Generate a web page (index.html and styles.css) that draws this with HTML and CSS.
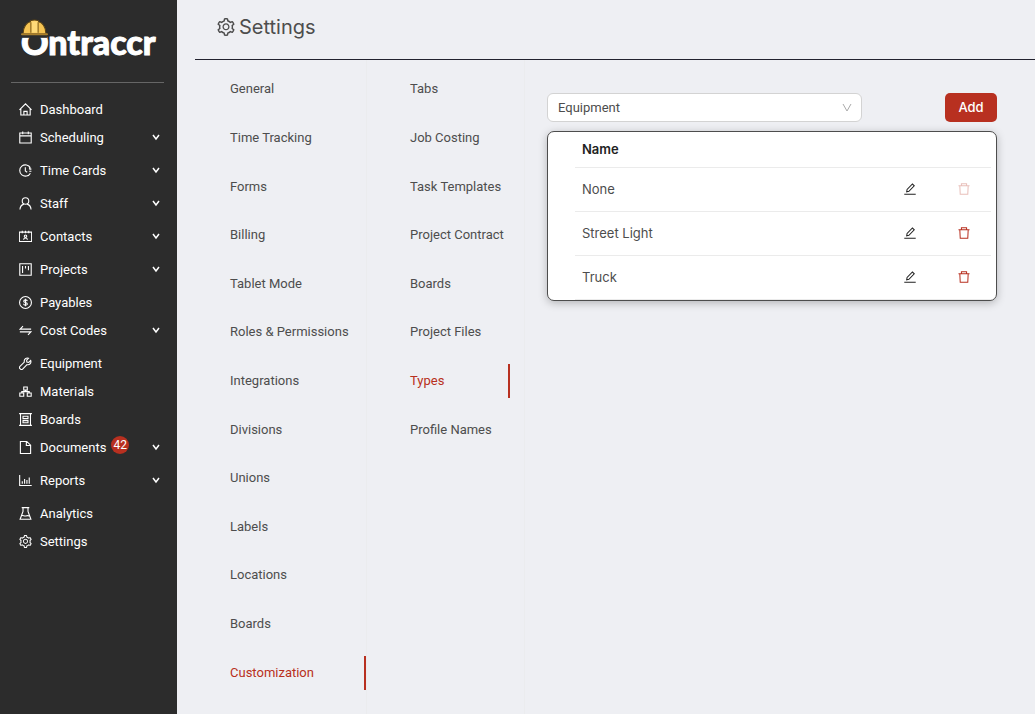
FILE: index.html
```
<!DOCTYPE html>
<html lang="en">

<head>
    <meta charset="UTF-8">
    <meta name="viewport" content="width=device-width, initial-scale=1.0">
    <title>Settings - Ontraccr</title>
    <link rel="stylesheet" href="styles.css">
</head>

<body>
    <!-- icon sprite -->
    <svg class="sprite" aria-hidden="true">
        <symbol id="i-home" viewBox="64 64 896 896">
            <path d="M96 540L512 124l416 416M190 460v430h644V460M400 890V640h224v250" />
        </symbol>
        <symbol id="i-calendar" viewBox="64 64 896 896">
            <path d="M118 200h788v690H118zM118 400h788M320 100v190M704 100v190" />
        </symbol>
        <symbol id="i-clock" viewBox="64 64 896 896">
            <path d="M850 330A390 390 0 1 0 850 694M500 280v260l130 90M770 420h150M770 560h150M850 330l-100 20" />
        </symbol>
        <symbol id="i-user" viewBox="64 64 896 896">
            <circle cx="512" cy="340" r="225" />
            <path d="M130 930c10-190 150-340 270-375M894 930c-10-190-150-340-270-375" />
        </symbol>
        <symbol id="i-contacts" viewBox="64 64 896 896">
            <path d="M90 210h844v650H90zM290 110v180M512 110v180M734 110v180M380 740c10-160 254-160 264 0" />
            <circle cx="512" cy="490" r="85" />
        </symbol>
        <symbol id="i-project" viewBox="64 64 896 896">
            <path d="M118 118h788v788H118zM310 270v484M512 270v180M714 270v300" />
        </symbol>
        <symbol id="i-dollar" viewBox="64 64 896 896">
            <circle cx="512" cy="512" r="410" />
            <path d="M635 420c-10-120-246-120-246 0 0 130 250 60 250 190 0 120-250 120-260-10M512 260v504" />
        </symbol>
        <symbol id="i-swap" viewBox="64 64 896 896">
            <path d="M900 420H140l200-210M124 604h760L684 814" />
        </symbol>
        <symbol id="i-tool" viewBox="64 64 896 896">
            <path d="M870 300L740 430l-135-15-15-135 130-130c-150-55-330 50-290 260L130 710c-50 50-50 100 0 150l34 34c50 50 100 50 150 0l300-300c210 40 310-140 256-294z" />
        </symbol>
        <symbol id="i-blocks" viewBox="64 64 896 896">
            <path d="M390 200h244v220H390zM120 620h270v220H120zM634 620h270v220H634zM512 420v100M255 620V520h514v100" />
        </symbol>
        <symbol id="i-board" viewBox="64 64 896 896">
            <path d="M70 110h884M70 914h884M170 110v804M854 110v804M340 290h344v160H340zM340 590h344v150H340z" />
        </symbol>
        <symbol id="i-file" viewBox="64 64 896 896">
            <path d="M160 90h430l274 264v580H160zM570 100v274h284" />
        </symbol>
        <symbol id="i-chart" viewBox="64 64 896 896">
            <path d="M110 130v730h830M290 740V570M450 740V400M610 740V480M770 740V310" />
        </symbol>
        <symbol id="i-flask" viewBox="64 64 896 896">
            <path d="M250 110h524M340 110v260L140 904h744L684 370V110M240 660c110-60 190 60 290 20s140-40 250 0" />
        </symbol>
        <symbol id="i-setting" viewBox="64 64 896 896">
            <path class="solid" d="M924.8 625.7l-65.5-56c3.1-19 4.7-38.4 4.7-57.8s-1.6-38.8-4.7-57.8l65.5-56a32.03 32.03 0 009.3-35.2l-.9-2.6a443.74 443.74 0 00-79.7-137.9l-1.8-2.1a32.12 32.12 0 00-35.1-9.5l-81.3 28.9c-30-24.6-63.5-44-99.7-57.6l-15.7-85a32.05 32.05 0 00-25.8-25.7l-2.7-.5c-52.1-9.4-106.9-9.4-159 0l-2.7.5a32.05 32.05 0 00-25.8 25.7l-15.8 85.4a351.86 351.86 0 00-99 57.4l-81.9-29.1a32 32 0 00-35.1 9.5l-1.8 2.1a446.02 446.02 0 00-79.7 137.9l-.9 2.6c-4.5 12.5-.8 26.5 9.3 35.2l66.3 56.6c-3.1 18.8-4.6 38-4.6 57.1 0 19.2 1.5 38.4 4.6 57.1L99 625.5a32.03 32.03 0 00-9.3 35.2l.9 2.6c18.1 50.4 44.9 96.9 79.7 137.9l1.8 2.1a32.12 32.12 0 0035.1 9.5l81.9-29.1c29.8 24.5 63.1 43.9 99 57.4l15.8 85.4a32.05 32.05 0 0025.8 25.7l2.7.5a449.4 449.4 0 00159 0l2.7-.5a32.05 32.05 0 0025.8-25.7l15.7-85a350 350 0 0099.7-57.6l81.3 28.9a32 32 0 0035.1-9.5l1.8-2.1c34.8-41.1 61.6-87.5 79.7-137.9l.9-2.6c4.5-12.3.8-26.3-9.3-35zM788.3 465.9c2.5 15.1 3.8 30.6 3.8 46.1s-1.3 31-3.8 46.1l-6.6 40.1 74.7 63.9a370.03 370.03 0 01-42.6 73.6L721 702.8l-31.4 25.8c-23.9 19.6-50.5 35-79.3 45.8l-38.1 14.3-17.9 97a377.5 377.5 0 01-85 0l-17.9-97.2-37.8-14.5c-28.5-10.8-55-26.2-78.7-45.7l-31.4-25.9-93.4 33.2c-17-22.9-31.2-47.6-42.6-73.6l75.5-64.5-6.5-40c-2.4-14.9-3.7-30.3-3.7-45.5 0-15.3 1.2-30.6 3.7-45.5l6.5-40-75.5-64.5c11.3-26.1 25.6-50.7 42.6-73.6l93.4 33.2 31.4-25.9c23.7-19.5 50.2-34.9 78.7-45.7l37.9-14.3 17.9-97.2c28.1-3.2 56.8-3.2 85 0l17.9 97 38.1 14.3c28.7 10.8 55.4 26.2 79.3 45.8l31.4 25.8 92.8-32.9c17 22.9 31.2 47.6 42.6 73.6L781.8 426l6.5 39.9zM512 326c-97.2 0-176 78.8-176 176s78.8 176 176 176 176-78.8 176-176-78.8-176-176-176zm79.2 255.2A111.6 111.6 0 01512 614c-29.9 0-58-11.7-79.2-32.8A111.6 111.6 0 01400 502c0-29.9 11.7-58 32.8-79.2C454 401.6 482.1 390 512 390c29.9 0 58 11.6 79.2 32.8A111.6 111.6 0 01624 502c0 29.9-11.7 58-32.8 79.2z" />
        </symbol>
        <symbol id="i-edit" viewBox="64 64 896 896">
            <path d="M84 902h856M264 720l30-170 400-410 136 136-400 410z" />
        </symbol>
        <symbol id="i-delete" viewBox="64 64 896 896">
            <path d="M100 272h824M320 260V115h384v145M200 280l30 630h564l30-630" />
        </symbol>
        <symbol id="i-down" viewBox="0 0 10 10">
            <path d="M1 1l4 7 4-7" />
        </symbol>
        <symbol id="i-caret" viewBox="0 0 8 8">
            <path d="M1 2l3 4 3-4" />
        </symbol>
    </svg>

    <div class="app">
        <aside class="sidebar">
            <a class="logo" href="#">
                <svg class="helmet" viewBox="0 0 26 18" aria-hidden="true">
                    <path d="M2 14C2 7 6 3 9 2.500V1.500Q13 0 17 1.500V2.500C20 3 24 7 24 14z" fill="#f6c453" stroke="#5a4316" />
                    <path d="M10 2h6v11h-6z" fill="#ffda78" />
                    <path d="M9.500 3v10M16.500 3v10" stroke="#7a5a1c" fill="none" />
                    <path d="M1 15h24v3H1z" fill="#2c2c2c" />
                    <path d="M1 14.500h24" stroke="#a97f2c" stroke-width="2" stroke-linecap="round" />
                </svg>
                <span>Ontraccr</span>
            </a>
            <nav class="menu">
                <a class="item" href="#"><svg class="icon"><use href="#i-home" /></svg>Dashboard</a>
                <a class="item sub" href="#"><svg class="icon"><use href="#i-calendar" /></svg>Scheduling<svg class="caret"><use href="#i-caret" /></svg></a>
                <a class="item sub" href="#"><svg class="icon"><use href="#i-clock" /></svg>Time Cards<svg class="caret"><use href="#i-caret" /></svg></a>
                <a class="item sub" href="#"><svg class="icon"><use href="#i-user" /></svg>Staff<svg class="caret"><use href="#i-caret" /></svg></a>
                <a class="item sub" href="#"><svg class="icon"><use href="#i-contacts" /></svg>Contacts<svg class="caret"><use href="#i-caret" /></svg></a>
                <a class="item sub" href="#"><svg class="icon"><use href="#i-project" /></svg>Projects<svg class="caret"><use href="#i-caret" /></svg></a>
                <a class="item" href="#"><svg class="icon"><use href="#i-dollar" /></svg>Payables</a>
                <a class="item sub" href="#"><svg class="icon"><use href="#i-swap" /></svg>Cost Codes<svg class="caret"><use href="#i-caret" /></svg></a>
                <a class="item" href="#"><svg class="icon"><use href="#i-tool" /></svg>Equipment</a>
                <a class="item" href="#"><svg class="icon"><use href="#i-blocks" /></svg>Materials</a>
                <a class="item" href="#"><svg class="icon"><use href="#i-board" /></svg>Boards</a>
                <a class="item sub" href="#"><svg class="icon"><use href="#i-file" /></svg>Documents<span class="badge">42</span><svg class="caret"><use href="#i-caret" /></svg></a>
                <a class="item sub" href="#"><svg class="icon"><use href="#i-chart" /></svg>Reports<svg class="caret"><use href="#i-caret" /></svg></a>
                <a class="item" href="#"><svg class="icon"><use href="#i-flask" /></svg>Analytics</a>
                <a class="item" href="#"><svg class="icon"><use href="#i-setting" /></svg>Settings</a>
            </nav>
        </aside>

        <main class="main">
            <header class="header">
                <svg class="icon"><use href="#i-setting" /></svg>
                <h1>Settings</h1>
            </header>

            <div class="body">
                <nav class="tabs">
                    <a href="#">General</a>
                    <a href="#">Time Tracking</a>
                    <a href="#">Forms</a>
                    <a href="#">Billing</a>
                    <a href="#">Tablet Mode</a>
                    <a href="#">Roles &amp; Permissions</a>
                    <a href="#">Integrations</a>
                    <a href="#">Divisions</a>
                    <a href="#">Unions</a>
                    <a href="#">Labels</a>
                    <a href="#">Locations</a>
                    <a href="#">Boards</a>
                    <a href="#" class="active">Customization</a>
                </nav>
                <nav class="tabs inner">
                    <a href="#">Tabs</a>
                    <a href="#">Job Costing</a>
                    <a href="#">Task Templates</a>
                    <a href="#">Project Contract</a>
                    <a href="#">Boards</a>
                    <a href="#">Project Files</a>
                    <a href="#" class="active">Types</a>
                    <a href="#">Profile Names</a>
                </nav>

                <section class="content">
                    <div class="toolbar">
                        <div class="select">
                            <select id="type" aria-label="Type">
                                <option>Equipment</option>
                            </select>
                            <svg class="arrow"><use href="#i-down" /></svg>
                        </div>
                        <button type="button" class="add">Add</button>
                    </div>
                    <div class="card">
                        <table>
                            <thead>
                                <tr>
                                    <th>Name</th>
                                    <th class="action"></th>
                                    <th class="action"></th>
                                </tr>
                            </thead>
                            <tbody>
                                <tr>
                                    <td>None</td>
                                    <td class="action"><button type="button" class="edit" aria-label="Edit"><svg class="icon"><use href="#i-edit" /></svg></button></td>
                                    <td class="action"><button type="button" class="delete" aria-label="Delete" disabled><svg class="icon"><use href="#i-delete" /></svg></button></td>
                                </tr>
                                <tr>
                                    <td>Street Light</td>
                                    <td class="action"><button type="button" class="edit" aria-label="Edit"><svg class="icon"><use href="#i-edit" /></svg></button></td>
                                    <td class="action"><button type="button" class="delete" aria-label="Delete"><svg class="icon"><use href="#i-delete" /></svg></button></td>
                                </tr>
                                <tr>
                                    <td>Truck</td>
                                    <td class="action"><button type="button" class="edit" aria-label="Edit"><svg class="icon"><use href="#i-edit" /></svg></button></td>
                                    <td class="action"><button type="button" class="delete" aria-label="Delete"><svg class="icon"><use href="#i-delete" /></svg></button></td>
                                </tr>
                            </tbody>
                        </table>
                    </div>
                </section>
            </div>
        </main>
    </div>
</body>

</html>
```
FILE: styles.css
```
* {
    box-sizing: border-box;
}

body {
    margin: 0;
    font-family: Roboto, sans-serif;
    font-size: 13px;
    color: #4d4d4d;
    background-color: #eeeff3;
}

a {
    color: inherit;
    text-decoration: none;
}

.sprite {
    display: none;
}

symbol {
    overflow: visible;
}

.icon,
.caret,
.arrow {
    flex: none;
    fill: none;
    stroke: currentColor;
}

.icon {
    width: 12px;
    height: 12px;
    stroke-width: 76;
}

.solid {
    fill: currentColor;
    stroke: none;
}

.app {
    display: flex;
    min-height: 100vh;
}

/* sidebar */
.sidebar {
    flex: none;
    width: 177px;
    padding: 0 13px 0 11px;
    color: #fff;
    background-color: #2c2c2c;
}

.logo {
    display: block;
    position: relative;
    height: 83px;
    padding: 23px 0 0 10px;
    border-bottom: 1px solid #666;
    font-family: Lato, sans-serif;
    font-size: 34px;
    font-weight: 900;
    line-height: 38px;
    -webkit-text-stroke: 1px #fff;
}

.helmet {
    position: absolute;
    top: 19px;
    left: 10px;
    width: 27px;
    height: 19px;
}

.menu {
    display: flex;
    flex-direction: column;
    padding-top: 12px;
}

.item {
    display: flex;
    align-items: center;
    height: 28px;
    padding-left: 8px;
}

.item .icon {
    width: 13px;
    height: 13px;
    margin-right: 8px;
}

.sub {
    margin-bottom: 5px;
}

.caret {
    width: 8px;
    height: 8px;
    margin-left: auto;
    margin-right: 4px;
    stroke-width: 1.5;
}

.badge {
    width: 18px;
    height: 18px;
    margin: 0 0 4px 5px;
    border-radius: 50%;
    font-size: 12px;
    line-height: 18px;
    text-align: center;
    background-color: #b83020;
}

/* page */
.main {
    display: flex;
    flex: 1;
    flex-direction: column;
    padding-left: 18px;
}

.header {
    display: flex;
    align-items: center;
    gap: 4px;
    height: 60px;
    padding: 0 0 5px 22px;
    border-bottom: 1px solid #22222e;
}

.header .icon {
    width: 18px;
    height: 18px;
}

h1 {
    margin: 0;
    font-family: Inter, sans-serif;
    font-size: 20px;
    font-weight: 400;
}

.body {
    display: flex;
    flex: 1;
}

.tabs {
    display: grid;
    grid-template-rows: repeat(13, 1fr);
    align-items: center;
    flex: none;
    width: 172px;
    padding: 5px 0 17px 35px;
    border-right: 1px solid #ebecee;
}

.tabs a {
    line-height: 34px;
    white-space: nowrap;
    border-right: 2px solid transparent;
}

.tabs .active {
    color: #b83020;
    border-color: #b83020;
}

.inner {
    width: 158px;
    padding-left: 43px;
    padding-right: 14px;
}

.content {
    flex: 1;
    padding: 33px 38px 33px 22px;
}

.toolbar {
    display: flex;
    justify-content: space-between;
    margin-bottom: 9px;
}

.select {
    position: relative;
    width: 70%;
}

select {
    width: 100%;
    height: 29px;
    padding: 0 30px 0 10px;
    border: 1px solid #d3d3d3;
    border-radius: 6px;
    font: inherit;
    color: inherit;
    background-color: #fff;
    appearance: none;
}

.arrow {
    position: absolute;
    top: 10px;
    right: 10px;
    width: 10px;
    height: 10px;
    color: #aaa;
    pointer-events: none;
}

.add {
    width: 52px;
    height: 29px;
    padding: 0 0 2px;
    border: none;
    border-radius: 5px;
    font: 500 13px Inter, sans-serif;
    color: #fff;
    background-color: #b83020;
    cursor: pointer;
}

.card {
    padding: 0 5px 0 27px;
    border: 1px solid #4d4d4d;
    border-radius: 7px;
    background-color: #fff;
    box-shadow: 0 2px 8px rgba(0, 0, 0, 0.25);
}

table {
    width: 100%;
    border-collapse: collapse;
    font-family: Inter, sans-serif;
}

th,
td {
    height: 44px;
    padding: 0 7px;
    border-bottom: 1px solid #ebebeb;
    text-align: left;
}

th {
    height: 35px;
    font-weight: 600;
    color: #222;
}

.action {
    width: 54px;
    padding: 0;
    text-align: center;
}

.edit,
.delete {
    display: flex;
    margin: 0 auto;
    padding: 0;
    border: none;
    background: none;
    color: #222;
    cursor: pointer;
}

.delete {
    color: #b83020;
}

.delete:disabled {
    opacity: 0.3;
    cursor: default;
}
```
